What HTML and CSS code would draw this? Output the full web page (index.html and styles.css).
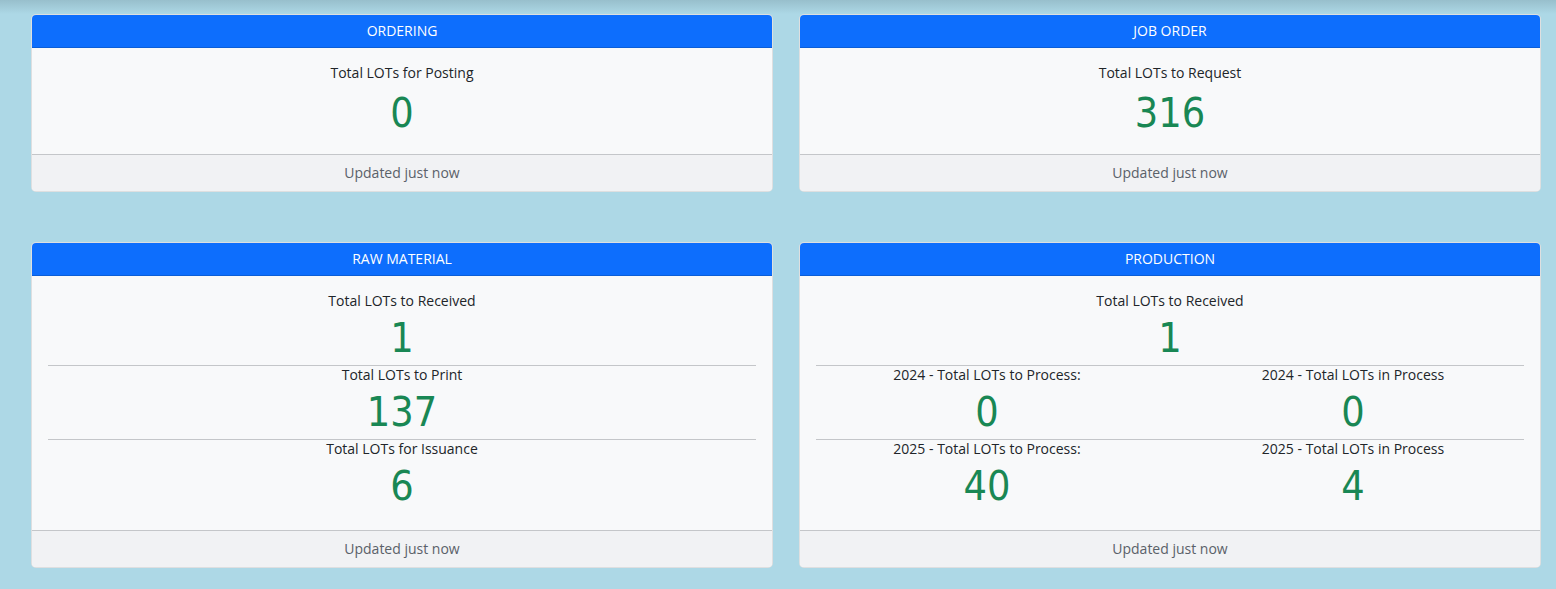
FILE: index.html
```html
<!DOCTYPE html>
<html lang="en">
<head>
<meta charset="utf-8">
<title>Dashboard</title>
<link rel="stylesheet" href="styles.css">
</head>
<body>
<div class="shade"></div>
<main class="dashboard">
  <section class="card">
    <header class="card-header">ORDERING</header>
    <div class="card-body single">
      <div class="stat">
        <div class="stat-label">Total LOTs for Posting</div>
        <div class="stat-value">0</div>
      </div>
    </div>
    <footer class="card-footer">Updated just now</footer>
  </section>

  <section class="card">
    <header class="card-header">JOB ORDER</header>
    <div class="card-body single">
      <div class="stat">
        <div class="stat-label">Total LOTs to Request</div>
        <div class="stat-value">316</div>
      </div>
    </div>
    <footer class="card-footer">Updated just now</footer>
  </section>

  <section class="card">
    <header class="card-header">RAW MATERIAL</header>
    <div class="card-body">
      <div class="stat ruled">
        <div class="stat-label">Total LOTs to Received</div>
        <div class="stat-value">1</div>
      </div>
      <div class="stat ruled">
        <div class="stat-label">Total LOTs to Print</div>
        <div class="stat-value">137</div>
      </div>
      <div class="stat">
        <div class="stat-label">Total LOTs for Issuance</div>
        <div class="stat-value">6</div>
      </div>
    </div>
    <footer class="card-footer">Updated just now</footer>
  </section>

  <section class="card">
    <header class="card-header">PRODUCTION</header>
    <div class="card-body">
      <div class="stat ruled">
        <div class="stat-label">Total LOTs to Received</div>
        <div class="stat-value">1</div>
      </div>
      <div class="stat-row ruled">
        <div class="stat">
          <div class="stat-label">2024 - Total LOTs to Process:</div>
          <div class="stat-value">0</div>
        </div>
        <div class="stat">
          <div class="stat-label">2024 - Total LOTs in Process</div>
          <div class="stat-value">0</div>
        </div>
      </div>
      <div class="stat-row">
        <div class="stat">
          <div class="stat-label">2025 - Total LOTs to Process:</div>
          <div class="stat-value">40</div>
        </div>
        <div class="stat">
          <div class="stat-label">2025 - Total LOTs in Process</div>
          <div class="stat-value">4</div>
        </div>
      </div>
    </div>
    <footer class="card-footer">Updated just now</footer>
  </section>
</main>
</body>
</html>
```

FILE: styles.css
```css
html, body {
  margin: 0;
  padding: 0;
}

body {
  background: #add8e6;
  font-family: "Open Sans", "Noto Sans", Lato, sans-serif;
  font-size: 14px;
  color: #212529;
  min-height: 589px;
  position: relative;
}

.shade {
  position: absolute;
  top: 0;
  left: 0;
  right: 0;
  height: 14px;
  background: linear-gradient(to bottom, #98bfcc 0%, rgba(173, 216, 230, 0) 100%);
  pointer-events: none;
}

.dashboard {
  display: grid;
  grid-template-columns: 742px 742px;
  column-gap: 26px;
  row-gap: 50px;
  padding: 14px 15px 20px 31px;
  align-items: start;
}

.card {
  display: flex;
  flex-direction: column;
  border: 1px solid rgba(0, 0, 0, 0.1);
  border-radius: 5px;
  overflow: hidden;
  background: #f8f9fa;
}

.card-header {
  background: #0d6efd;
  color: #ffffff;
  text-align: center;
  padding: 8px 16px;
  line-height: 17px;
  font-size: 14px;
  border-bottom: 1px solid #0b5ed7;
  margin-top: -1px;
  margin-left: -1px;
  margin-right: -1px;
}

.card-body {
  background: #f8f9fa;
  padding: 16px 16px 17px;
  display: flex;
  flex-direction: column;
}

.stat {
  display: flex;
  flex-direction: column;
  align-items: center;
  padding-bottom: 3px;
}

.stat-label {
  line-height: 18px;
  font-size: 14px;
  color: #212529;
}

.stat-value {
  margin-top: 5px;
  line-height: 47px;
  font-family: "DejaVu Sans Condensed", "DejaVu Sans", sans-serif;
  font-stretch: condensed;
  font-size: 41px;
  color: #198754;
}

.card-body.single .stat {
  padding-bottom: 0;
}

.card-body.single .stat-value {
  margin-top: 8px;
}

.card-body.single {
  padding-bottom: 17px;
}

.ruled {
  border-bottom: 1px solid #c4c6c9;
}

.stat-row {
  display: grid;
  grid-template-columns: 1fr 1fr;
}

.stat-row .stat {
  padding-bottom: 3px;
}

.stat-row > .stat:first-child {
  margin-left: -12px;
}

.stat-row > .stat:last-child {
  margin-right: -12px;
}

.card-footer {
  background: #f1f2f4;
  border-top: 1px solid #c4c6c9;
  color: #5a6169;
  text-align: center;
  padding: 8px 16px;
  line-height: 20px;
  font-size: 14px;
}
```
